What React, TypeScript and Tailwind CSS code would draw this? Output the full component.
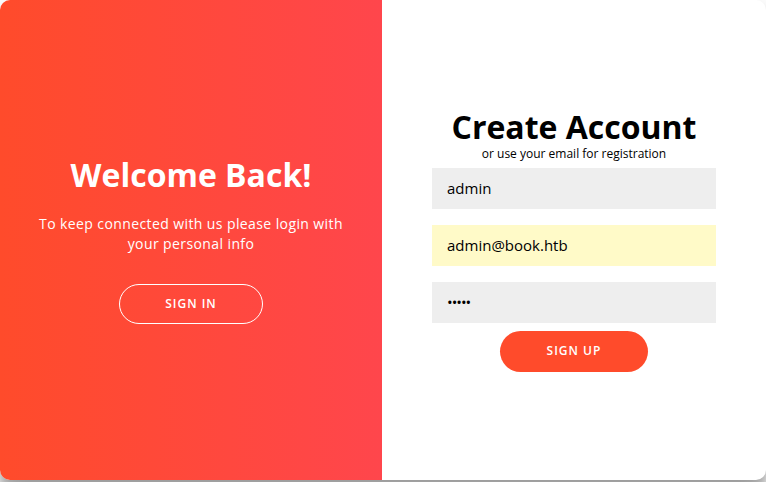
export default function App() {
  return (
    <div className="w-[766px] h-[482px] bg-white" style={{ fontFamily: '"Open Sans", "Noto Sans", sans-serif' }}>
      <div className="w-[766px] h-[480px] flex overflow-hidden rounded-[10px] bg-white shadow-[0_14px_28px_rgba(0,0,0,0.25),0_10px_10px_rgba(0,0,0,0.22)]">
        {/* Overlay panel */}
        <div className="w-[382px] h-full flex flex-col items-center justify-center px-8 text-center text-white bg-[linear-gradient(to_right,#ff4b2b,#ff464c)]">
          <h1 className="text-[32px] font-bold leading-[38px] m-0">Welcome Back!</h1>
          <p className="text-[14px] leading-5 tracking-[0.4px] font-normal mt-5 mb-[30px]">
            To keep connected with us please login with your personal info
          </p>
          <button className="w-[144px] h-10 rounded-[20px] border border-white bg-transparent text-[12px] font-semibold tracking-[1px] uppercase text-white">
            Sign In
          </button>
        </div>

        {/* Sign up form */}
        <div className="flex-1 h-full flex flex-col items-center justify-center px-[50px] text-center">
          <h1 className="text-[32px] font-bold leading-[36px] text-black">Create Account</h1>
          <span className="text-[12px] leading-[18px] text-black">or use your email for registration</span>
          <div className="w-full mt-[5px] bg-[#eeeeee] h-[41px] px-[15px] flex items-center text-[15px] text-black">admin</div>
          <div className="w-full mt-4 bg-[#fffac8] h-[41px] px-[15px] flex items-center text-[15px] text-black">admin@book.htb</div>
          <div className="w-full mt-4 bg-[#eeeeee] h-[41px] px-[15px] flex items-center text-[15px] text-black tracking-[-1px]">•••••</div>
          <button className="mt-2 w-[148px] h-[41px] rounded-[21px] bg-[#ff4b2b] text-[12px] font-semibold tracking-[1px] uppercase text-white">
            Sign Up
          </button>
        </div>
      </div>
    </div>
  )
}
